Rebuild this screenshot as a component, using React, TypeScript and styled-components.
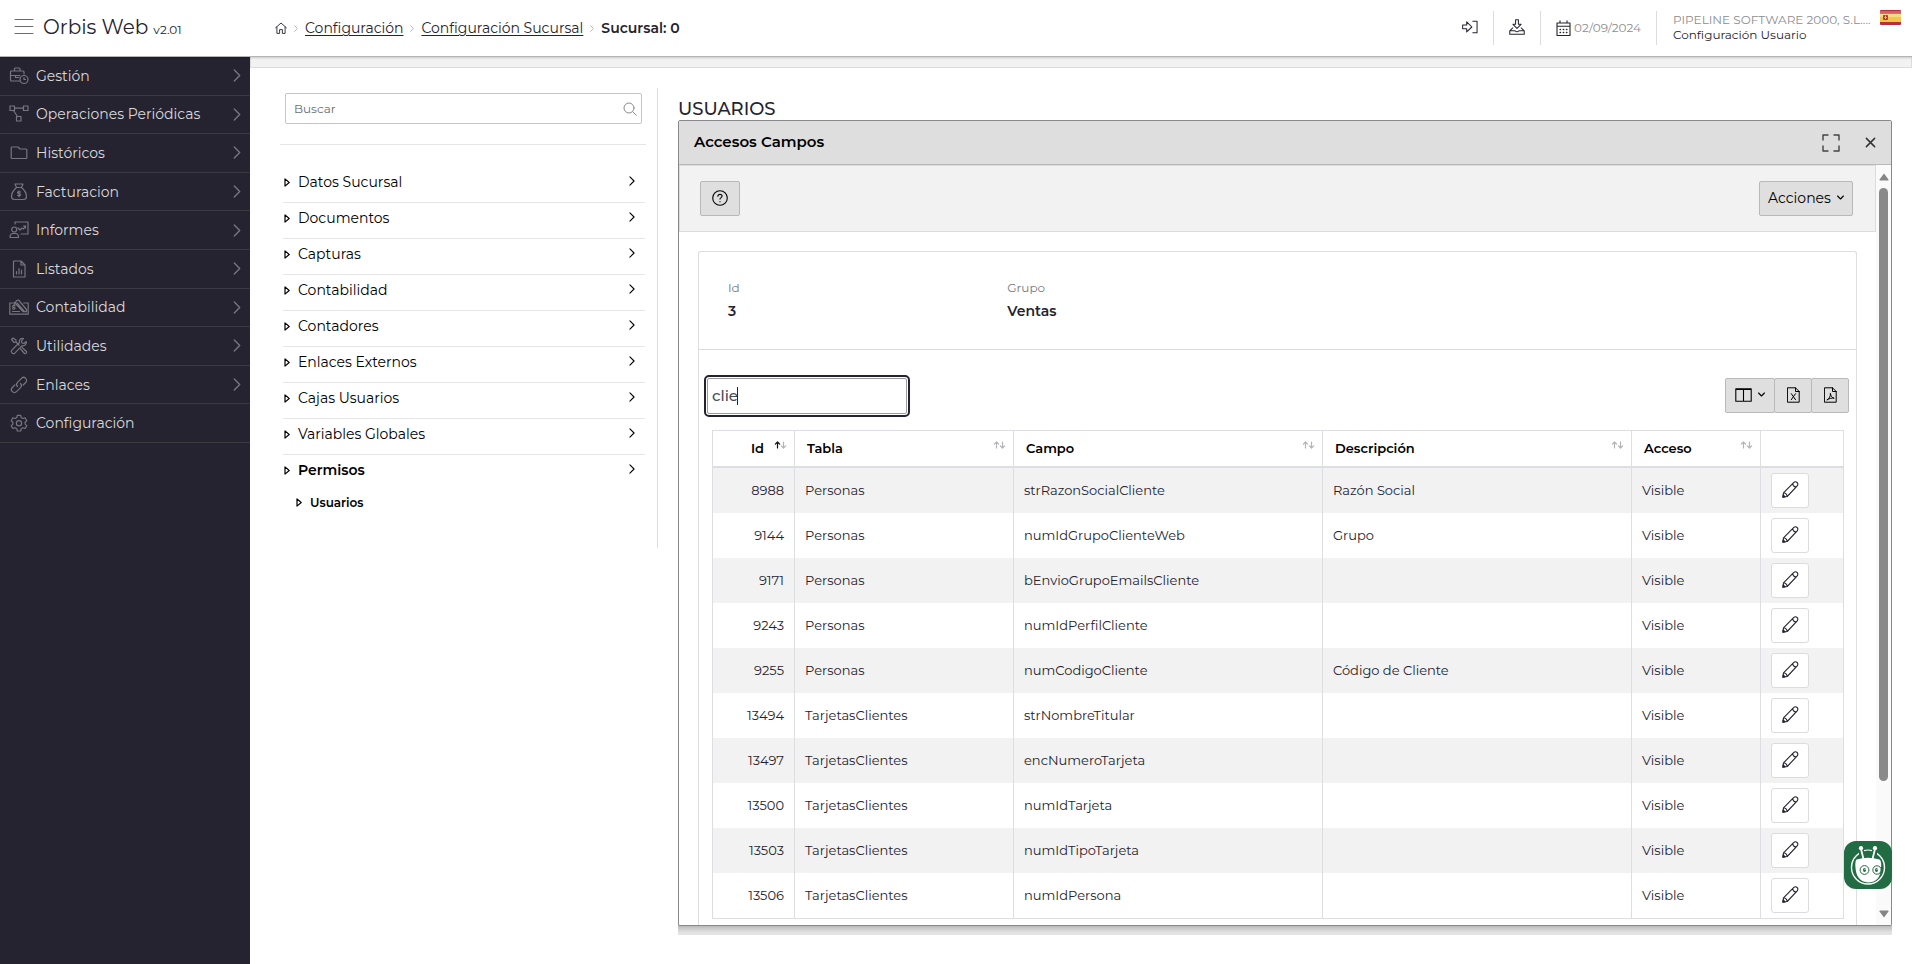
import React from "react";
import styled, { createGlobalStyle } from "styled-components";

const GlobalStyle = createGlobalStyle`
  *, *::before, *::after { box-sizing: border-box; }
  body {
    margin: 0;
    background: #fff;
    color: #25232f;
    font-family: Montserrat, Inter, "Open Sans", sans-serif;
    font-size: 14px;
    line-height: 20px;
  }
  button, input { font: inherit; color: inherit; }
  a { color: inherit; text-decoration: none; }
  ul, ol, dl, dd, h1, h2, h3 { margin: 0; padding: 0; list-style: none; }
`;

/* ---------- icons ---------- */

const Svg = styled.svg<{ $w: number; $h?: number; $stroke?: number }>`
  display: block;
  flex: none;
  width: ${(p) => p.$w}px;
  height: ${(p) => p.$h ?? p.$w}px;
  fill: none;
  stroke: currentColor;
  stroke-width: ${(p) => p.$stroke ?? 1.2};
  stroke-linecap: round;
  stroke-linejoin: round;
`;

const icons: Record<string, React.ReactNode> = {
  briefcase: (
    <>
      <path d="M11 15H2.5a1 1 0 0 1-1-1V6a1 1 0 0 1 1-1H14a1 1 0 0 1 1 1v2M5.5 5V3a1 1 0 0 1 1-1h3.500a1 1 0 0 1 1 1v2M1.500 9.500H11M6.500 9.500v2H10" />
      <circle cx="15" cy="13.500" r="4" />
      <path d="M15 11.500v2h1.500" />
    </>
  ),
  network: (
    <>
      <rect x="1" y="2" width="4.500" height="4.500" />
      <rect x="14.500" y="2" width="4.500" height="4.500" />
      <rect x="7.500" y="12.500" width="4.500" height="4.500" />
      <path d="M5.500 4.200h9M4.500 6.500l4 6" />
    </>
  ),
  folder: <path d="M3 15.500h14a.8.8 0 0 0 .8-.8V6.800a.8.8 0 0 0-.8-.8h-6L9 4H3a.8.8 0 0 0-.8.8v9.900c0 .5.300.8.8.8z" />,
  moneybag: (
    <>
      <path d="M7.500 5.500L6 2h8l-1.500 3.500zM7.500 5.500C4 8.500 2.500 11.500 2.500 14.500c0 2 1.200 3 3 3h9c1.800 0 3-1 3-3 0-3-1.500-6-5-9" />
      <path d="M11.500 10c-.4-.5-3-.7-3 .6 0 1.300 3 .8 3 2.200 0 1.300-2.600 1.200-3 .5M10 8.800v6" />
    </>
  ),
  board: (
    <>
      <path d="M6 4V2h13v12h-7M9.500 17.500H1c0-3 1.200-4 3-4h2.500c1.800 0 3 1 3 4z" />
      <circle cx="5.200" cy="9.500" r="2.500" />
      <path d="M9 8l2 2 2-2 1.500 1L16.500 6M14.500 6h2v2" />
    </>
  ),
  report: (
    <>
      <path d="M4.500 2h7.500l4 4v12h-11.500zM12 2v4h4" />
      <path d="M7.500 15v-2.500M10 15V9.500M12.500 15v-4" />
    </>
  ),
  accounting: (
    <>
      <path d="M5 6H.8v11.200h18.400V6h-4.500" />
      <path d="M5 8l2.500-4.500 2-.5 8 9.500v2.200H14L5.500 5.500M8 6l7 8M3.500 14.500h7" />
      <path d="M6 8.800c-.5-.4-2.500-.4-2.500.6 0 1.200 2.500.7 2.500 1.900 0 1-2 1-2.500.4" />
    </>
  ),
  tools: (
    <>
      <path d="M2.500 3.500l1.500-1.500 3 2v2l3 3M13 11.500l4.500 4c.8.900-1 2.700-2 2l-4-4.500M7 6L5 6.500l-2.500-3" />
      <path d="M14.500 2.500c-2-.8-4.800 1-4 4L2.800 14.200c-1.500 1.800.8 4.300 3 3l7.200-7.500c3 .8 5-2 4.200-4.200L15 7.500l-2-.5-.5-2z" />
    </>
  ),
  link: (
    <>
      <path d="M8.500 11.500c-1.200-1.200-1.200-3 0-4.200l4-4c1.200-1.200 3-1.200 4.200 0s1.200 3 0 4.200l-2.500 2.500" />
      <path d="M11.500 8.500c1.200 1.200 1.200 3 0 4.200l-4 4c-1.200 1.200-3 1.200-4.200 0s-1.200-3 0-4.200l2.500-2.500" />
    </>
  ),
  gear: (
    <>
      <path d="M8.300 2.300h3.400l.5 2.200 1.700 1 2.200-.7 1.700 2.900-1.700 1.500v1.900l1.700 1.500-1.700 2.900-2.200-.7-1.700 1-.5 2.200H8.300l-.5-2.200-1.700-1-2.200.7-1.700-2.900 1.700-1.500V9.200L2.200 7.700l1.700-2.900 2.200.7 1.700-1z" />
      <circle cx="10" cy="10.200" r="2.600" />
    </>
  ),
};

const ChevronRight = ({ w = 7, h = 12 }: { w?: number; h?: number }) => (
  <Svg $w={w} $h={h} $stroke={1.3} viewBox="0 0 7 12" aria-hidden="true">
    <path d="M1 1l5 5-5 5" />
  </Svg>
);

const ChevronDown = () => (
  <Svg $w={7} $h={5} $stroke={1.1} viewBox="0 0 7 5" aria-hidden="true">
    <path d="M.6 1l2.900 3L6.400 1" />
  </Svg>
);

const Triangle = () => (
  <Svg $w={6} $h={9} $stroke={1.2} viewBox="0 0 6 9" aria-hidden="true">
    <path d="M1 .9v7.200L5.200 4.500z" />
  </Svg>
);

const PencilIcon = () => (
  <Svg $w={17} $h={17} $stroke={1.1} viewBox="0 0 17 17" aria-hidden="true">
    <path d="M.9 16.100l.6-4.300L11.600 1.700c1.100-1.100 2.500-1.100 3.500-.2 1 1 1 2.500-.1 3.600L5.200 15.500zM10.900 2.400c-.3 2 1.400 3.800 3.400 3.400M1.500 11.800c1.800.2 3.400 1.600 3.700 3.700" />
    <path d="M.9 16.100l.3-2.200 1.900 1.900z" fill="currentColor" />
  </Svg>
);

/* ---------- top bar ---------- */

const TopBar = styled.header`
  position: relative;
  z-index: 1;
  display: flex;
  align-items: center;
  height: 57px;
  border-bottom: 1px solid #b4b4b4;
  background: #fff;
  box-shadow: 0 1px 2px rgba(0, 0, 0, 0.16);
`;

const Brand = styled.div`
  display: flex;
  align-items: center;
  flex: none;
  gap: 9px;
  width: 250px;
  padding: 0 0 3px 14px;
`;

const IconButton = styled.button`
  display: flex;
  padding: 0;
  border: 0;
  background: none;
  color: #6b6b70;
  cursor: pointer;
`;

const BrandName = styled.h1`
  padding-top: 3px;
  font-size: 20px;
  font-weight: 400;
  line-height: 26px;
`;

const Version = styled.small`
  margin-left: 5px;
  font-size: 12px;
`;

const Crumbs = styled.nav`
  display: flex;
  align-items: center;
  flex: 1;
  gap: 7px;
  padding-left: 25px;
  color: #25232f;
`;

const CrumbLink = styled.a`
  text-decoration: underline;
  text-underline-offset: 2px;
`;

const CrumbCurrent = styled.strong`
  font-weight: 600;
`;

const CrumbArrow = styled.span`
  color: #9f9fa3;
`;

const TopItem = styled.div`
  display: flex;
  align-items: center;
  height: 34px;
  padding: 0 15px;
  gap: 3px;
  border-right: 1px solid #dcdcdc;
  color: #25232f;
`;

const TopAction = styled(IconButton)`
  padding-bottom: 3px;
  color: #25232f;
`;

const DateText = styled.time`
  color: #8d8d90;
  font-size: 12px;
`;

const UserBox = styled.div`
  display: flex;
  align-items: flex-start;
  gap: 9px;
  padding: 0 11px 4px 16px;
  font-size: 12px;
  line-height: 15px;
`;

const UserLines = styled.div`
  width: 198px;
  padding-top: 2px;
  white-space: nowrap;
`;

const Company = styled.div`
  color: #8d8d90;
`;

/* ---------- layout ---------- */

const Body = styled.div`
  display: flex;
  min-height: calc(100vh - 57px);
`;

const Sidebar = styled.nav`
  flex: none;
  width: 250px;
  background: #25232f;
`;

const SideList = styled.ul`
  display: grid;
  grid-template-rows: repeat(10, 1fr);
  height: 386px;
`;

const SideItem = styled.li`
  border-bottom: 1px solid #3b3944;
`;

const SideLink = styled.a`
  display: flex;
  align-items: center;
  gap: 7px;
  height: 100%;
  padding: 0 9px;
  color: #77757f;
`;

const SideLabel = styled.span`
  flex: 1;
  color: #d9d9dc;
`;

const Main = styled.main`
  flex: 1;
  min-width: 0;
`;

const Strip = styled.div`
  height: 11px;
  border: 1px solid #dcdcdc;
  border-top: 0;
  background: #f2f2f2;
`;

const Columns = styled.div`
  display: flex;
  align-items: flex-start;
  padding: 20px 20px 0 0;
`;

const MenuColumn = styled.aside`
  flex: none;
  width: 408px;
  min-height: 460px;
  padding: 5px 11px 0 30px;
  border-right: 1px solid #dcdcdc;
`;

const SearchForm = styled.form`
  display: flex;
  align-items: center;
  height: 31px;
  margin: 0 4px 20px 5px;
  padding: 0 4px 0 8px;
  border: 1px solid #c5c5c9;
  border-radius: 2px;
  color: #8a8a8f;
`;

const SearchInput = styled.input`
  flex: 1;
  min-width: 0;
  padding: 0;
  border: 0;
  outline: 0;
  background: none;
  font-size: 12px;
  &::placeholder { color: #6d6d72; opacity: 1; }
`;

const MenuList = styled.ul`
  padding: 22px 1px 0 3px;
  border-top: 1px solid #e6e6e8;
`;

const MenuItem = styled.li<{ $active?: boolean }>`
  height: 36px;
  border-bottom: 1px solid ${(p) => (p.$active ? "transparent" : "#e6e6e8")};
  font-weight: ${(p) => (p.$active ? 600 : 400)};
  color: #000;
`;

const MenuLink = styled.a`
  display: flex;
  align-items: center;
  gap: 8px;
  height: 30px;
  padding: 0 10px 0 1px;
`;

const MenuLabel = styled.span`
  flex: 1;
`;

const MenuArrow = styled.span`
  padding-bottom: 3px;
`;

const SubLink = styled(MenuLink)`
  height: 23px;
  padding-left: 13px;
  font-size: 12px;
  font-weight: 600;
  color: #000;
`;

const Content = styled.section`
  flex: 1;
  min-width: 0;
  padding: 10px 0 30px 20px;
`;

const Title = styled.h2`
  font-size: 18px;
  font-weight: 500;
  line-height: 22px;
`;

/* ---------- dialog ---------- */

const DialogClip = styled.div`
  padding-bottom: 9px;
  background: linear-gradient(#b4b4b4, #e0e0e0 70%, #e6e6e6) bottom / 100% 10px no-repeat;
`;

const Dialog = styled.section`
  border: 1px solid #88888a;
  border-radius: 2px;
  background: #fff;
`;

const DialogHead = styled.header`
  display: flex;
  align-items: center;
  height: 44px;
  padding: 0 15px;
  border-bottom: 1px solid #b8b8b8;
  background: #dedede;
  color: #000;
`;

const DialogTitle = styled.h3`
  flex: 1;
  padding-bottom: 2px;
  font-size: 15px;
  font-weight: 600;
`;

const HeadActions = styled.div`
  display: flex;
  align-items: center;
  gap: 25px;
`;

const DialogBody = styled.div`
  display: flex;
`;

const Scroller = styled.div`
  flex: 1;
  min-width: 0;
`;

const ScrollTrack = styled.div`
  display: flex;
  flex-direction: column;
  align-items: center;
  flex: none;
  width: 15px;
  padding: 8px 0 7px;
  background: #fafafa;
`;

const ScrollArrow = styled.svg`
  display: block;
  width: 10px;
  height: 8px;
  fill: #858585;
`;

const ScrollThumb = styled.div`
  width: 9px;
  flex: 593 0 0;
  margin-top: 7px;
  border-radius: 5px;
  background: #898989;
`;

const ScrollRest = styled.div`
  flex: 129 0 0;
`;

const Toolbar = styled.div`
  display: flex;
  align-items: center;
  justify-content: space-between;
  height: 67px;
  padding: 0 22px 0 20px;
  border: 1px solid #dcdcdc;
  background: #f2f2f2;
`;

const GrayButton = styled.button<{ $w: number }>`
  display: flex;
  align-items: center;
  justify-content: center;
  gap: 6px;
  width: ${(p) => p.$w}px;
  height: 35px;
  padding: 0 0 2px;
  border: 1px solid #b9b9b9;
  border-radius: 2px;
  background: #dfdfdf;
  color: #000;
  cursor: pointer;
`;

const Card = styled.div`
  margin: 19px 19px 0;
  border: 1px solid #dcdee3;
  border-bottom: 0;
  border-radius: 3px 3px 0 0;
`;

const Fields = styled.dl`
  display: grid;
  grid-template-columns: repeat(4, 1fr);
  height: 98px;
  padding: 26px 20px 0;
  border-bottom: 1px solid #dcdcdc;
`;

const Field = styled.div`
  padding-left: 9px;
`;

const FieldLabel = styled.dt`
  color: #77777b;
  font-size: 12px;
`;

const FieldValue = styled.dd`
  padding-top: 3px;
  font-weight: 600;
`;

const Grid = styled.div`
  padding: 28px 13px 6px 13px;
`;

const GridTools = styled.div`
  display: flex;
  justify-content: space-between;
  align-items: flex-start;
  margin: 0 -6px 16px -5px;
`;

const FilterWrap = styled.div`
  position: relative;
`;

const FilterInput = styled.input`
  display: block;
  width: 200px;
  height: 36px;
  padding: 0 5px 1px 4px;
  border: 1px solid #9b9b9e;
  border-radius: 2px;
  outline: 2px solid #25232f;
  outline-offset: 1px;
  background: #fff;
  color: #474b57;
  font-size: 15px;
  font-weight: 500;
`;

const Caret = styled.span`
  position: absolute;
  top: 9px;
  left: 30px;
  width: 1px;
  height: 18px;
  background: #25232f;
`;

const ButtonGroup = styled.div`
  display: flex;
  ${GrayButton} + ${GrayButton} { margin-left: -1px; }
`;

const Table = styled.table`
  width: 100%;
  border: 1px solid #dcdee3;
  border-spacing: 0;
  border-right: 0;
  table-layout: fixed;
  font-size: 13px;
`;

const Th = styled.th`
  height: 37px;
  padding: 0 7px 1px 12px;
  border-right: 1px solid #dcdee3;
  border-bottom: 2px solid #dcdee3;
  color: #000;
  font-weight: 600;
  text-align: left;
`;

const ThInner = styled.div<{ $end?: boolean }>`
  display: flex;
  align-items: center;
  justify-content: ${(p) => (p.$end ? "flex-end" : "space-between")};
  gap: 10px;
`;

const SortMark = styled(Svg)<{ $sorted?: boolean }>`
  margin-bottom: 6px;
  color: #b4b4b8;
  path:first-child { color: ${(p) => (p.$sorted ? "#111" : "#b4b4b8")}; stroke: currentColor; }
`;

const Row = styled.tr`
  &:nth-child(odd) { background: #f2f2f2; }
`;

const Td = styled.td<{ $right?: boolean }>`
  height: 45px;
  padding: 0 10px 2px;
  border-right: 1px solid #dcdee3;
  text-align: ${(p) => (p.$right ? "right" : "left")};
`;

const EditTd = styled(Td)`
  padding: 0 10px;
`;

const EditButton = styled.button`
  display: flex;
  align-items: center;
  justify-content: center;
  width: 38px;
  height: 35px;
  padding: 0 0 3px;
  border: 1px solid #dcdcdf;
  border-radius: 3px;
  background: #fff;
  cursor: pointer;
`;

const ChatButton = styled.button`
  position: fixed;
  right: 20px;
  bottom: 75px;
  z-index: 2;
  width: 48px;
  height: 48px;
  padding: 0;
  border: 0;
  border-radius: 12px;
  background: #216c43;
  cursor: pointer;
`;

/* ---------- data ---------- */

const sideItems: [string, string][] = [
  ["briefcase", "Gestión"],
  ["network", "Operaciones Periódicas"],
  ["folder", "Históricos"],
  ["moneybag", "Facturacion"],
  ["board", "Informes"],
  ["report", "Listados"],
  ["accounting", "Contabilidad"],
  ["tools", "Utilidades"],
  ["link", "Enlaces"],
  ["gear", "Configuración"],
];

const menuItems = [
  "Datos Sucursal",
  "Documentos",
  "Capturas",
  "Contabilidad",
  "Contadores",
  "Enlaces Externos",
  "Cajas Usuarios",
  "Variables Globales",
  "Permisos",
];

const columns: [string, number][] = [
  ["Id", 82],
  ["Tabla", 219],
  ["Campo", 309],
  ["Descripción", 309],
  ["Acceso", 129],
  ["", 83],
];

const rows: [number, string, string, string][] = [
  [8988, "Personas", "strRazonSocialCliente", "Razón Social"],
  [9144, "Personas", "numIdGrupoClienteWeb", "Grupo"],
  [9171, "Personas", "bEnvioGrupoEmailsCliente", ""],
  [9243, "Personas", "numIdPerfilCliente", ""],
  [9255, "Personas", "numCodigoCliente", "Código de Cliente"],
  [13494, "TarjetasClientes", "strNombreTitular", ""],
  [13497, "TarjetasClientes", "encNumeroTarjeta", ""],
  [13500, "TarjetasClientes", "numIdTarjeta", ""],
  [13503, "TarjetasClientes", "numIdTipoTarjeta", ""],
  [13506, "TarjetasClientes", "numIdPersona", ""],
];

/* ---------- sections ---------- */

const Header = () => (
  <TopBar>
    <Brand>
      <IconButton aria-label="Menú">
        <Svg $w={20} $h={16} $stroke={1} viewBox="0 0 20 16">
          <path d="M1 .5h18M1 7.500h18M1 14.500h18" />
        </Svg>
      </IconButton>
      <BrandName>
        Orbis Web<Version>v2.01</Version>
      </BrandName>
    </Brand>
    <Crumbs aria-label="Ruta">
      <a href="#inicio" aria-label="Inicio">
        <Svg $w={12} $h={12} $stroke={0.9} viewBox="0 0 12 12">
          <path d="M.6 5.800L6 1l5.400 4.800M1.900 5v6.400h2.700V7.600h2.800v3.800h2.700V5" />
        </Svg>
      </a>
      <CrumbArrow><ChevronRight w={4} h={7} /></CrumbArrow>
      <CrumbLink href="#configuracion">Configuración</CrumbLink>
      <CrumbArrow><ChevronRight w={4} h={7} /></CrumbArrow>
      <CrumbLink href="#sucursal">Configuración Sucursal</CrumbLink>
      <CrumbArrow><ChevronRight w={4} h={7} /></CrumbArrow>
      <CrumbCurrent>Sucursal: 0</CrumbCurrent>
    </Crumbs>
    <TopItem>
      <TopAction aria-label="Salir">
        <Svg $w={16} $h={14} $stroke={1.1} viewBox="0 0 17 14">
          <path d="M.7 4.800v4h4.300v3.400L10.500 7 5 1.500v3.300zM11.500 1H16v12h-4.500" />
        </Svg>
      </TopAction>
    </TopItem>
    <TopItem>
      <TopAction aria-label="Descargar">
        <Svg $w={16} $h={16} $stroke={1.1} viewBox="0 0 17 17">
          <path d="M7 .8h3v4.800h2.800L8.500 10 4.200 5.600H7zM4 9.500L.8 12.500v3.700h15.400v-3.700L13 9.500M.8 12.500H6l2.500 1.200L11 12.500h5.200" />
        </Svg>
      </TopAction>
    </TopItem>
    <TopItem>
      <Svg $w={15} $h={17} $stroke={1.1} viewBox="0 0 15 17">
        <path d="M1 3h13v12.500H1zM1 6.200h13M4 .8V3M11 .8V3" />
        <path strokeWidth="1.600" d="M4.200 9.500h.2M7.400 9.500h.2M10.600 9.500h.2M4.200 12.500h.2M7.400 12.500h.2M10.600 12.500h.2" />
      </Svg>
      <DateText>02/09/2024</DateText>
    </TopItem>
    <UserBox>
      <UserLines>
        <Company>PIPELINE SOFTWARE 2000, S.L....</Company>
        <a href="#usuario">Configuración Usuario</a>
      </UserLines>
      <svg width="21" height="15" viewBox="0 0 21 15" role="img" aria-label="Español">
        <rect width="21" height="15" rx="1" fill="#b8303c" />
        <rect y="1" width="21" height="2" fill="#d0606a" />
        <rect y="3.500" width="21" height="8.500" fill="#f2c64c" />
        <rect y="4" width="21" height="3" fill="#f8da80" />
        <rect x="3" y="5" width="5" height="5" rx="1" fill="#a8402c" />
        <path d="M5.500 5.500v3.500M4 7.500h.8M6.300 7.500h.8" stroke="#f8da80" strokeWidth=".8" />
      </svg>
    </UserBox>
  </TopBar>
);

const SideNav = () => (
  <Sidebar aria-label="Principal">
    <SideList>
      {sideItems.map(([icon, label]) => (
        <SideItem key={label}>
          <SideLink href={`#${icon}`}>
            <Svg $w={20} viewBox="0 0 20 20" aria-hidden="true" $stroke={1.2}>{icons[icon]}</Svg>
            <SideLabel>{label}</SideLabel>
            {icon !== "gear" && <ChevronRight w={8} h={13} />}
          </SideLink>
        </SideItem>
      ))}
    </SideList>
  </Sidebar>
);

const BranchMenu = () => (
  <MenuColumn>
    <SearchForm role="search">
      <SearchInput type="text" placeholder="Buscar" aria-label="Buscar" />
      <Svg $w={14} $h={14} $stroke={1} viewBox="0 0 14 14" aria-hidden="true">
        <circle cx="6" cy="6" r="5" />
        <path d="M9.700 9.700l3.600 3.600" />
      </Svg>
    </SearchForm>
    <MenuList>
      {menuItems.map((label) => (
        <MenuItem key={label} $active={label === "Permisos"}>
          <MenuLink href="#menu">
            <Triangle />
            <MenuLabel>{label}</MenuLabel>
            <MenuArrow><ChevronRight w={6} h={10} /></MenuArrow>
          </MenuLink>
        </MenuItem>
      ))}
      <li>
        <SubLink href="#usuarios">
          <Triangle />
          Usuarios
        </SubLink>
      </li>
    </MenuList>
  </MenuColumn>
);

const FieldTable = () => (
  <Table>
    <colgroup>
      {columns.map(([name, width]) => (
        <col key={name} width={width} />
      ))}
    </colgroup>
    <thead>
      <tr>
        {columns.map(([name]) => (
          <Th key={name} scope="col">
            {name && (
              <ThInner $end={name === "Id"}>
                {name}
                <SortMark $w={13} $h={8} $stroke={1.2} $sorted={name === "Id"} viewBox="0 0 13 8">
                  <path d="M3.500 7V1M1.300 3.200L3.500 1l2.200 2.200" />
                  <path d="M9.500 1v6M7.300 4.800L9.500 7l2.200-2.200" />
                </SortMark>
              </ThInner>
            )}
          </Th>
        ))}
      </tr>
    </thead>
    <tbody>
      {rows.map(([id, table, field, description]) => (
        <Row key={id}>
          <Td $right>{id}</Td>
          <Td>{table}</Td>
          <Td>{field}</Td>
          <Td>{description}</Td>
          <Td>Visible</Td>
          <EditTd>
            <EditButton aria-label={`Editar ${field}`}>
              <PencilIcon />
            </EditButton>
          </EditTd>
        </Row>
      ))}
    </tbody>
  </Table>
);

const AccessDialog = () => (
  <DialogClip>
    <Dialog aria-label="Accesos Campos">
      <DialogHead>
        <DialogTitle>Accesos Campos</DialogTitle>
        <HeadActions>
          <IconButton aria-label="Maximizar">
            <Svg $w={18} $h={18} $stroke={1.4} viewBox="0 0 18 18" color="#444">
              <path d="M1 6V1h5M12 1h5v5M17 12v5h-5M6 17H1v-5" />
            </Svg>
          </IconButton>
          <IconButton aria-label="Cerrar">
            <Svg $w={11} $h={11} $stroke={1.6} viewBox="0 0 12 12" color="#333">
              <path d="M1.500 1.500l9 9M10.500 1.500l-9 9" />
            </Svg>
          </IconButton>
        </HeadActions>
      </DialogHead>
      <DialogBody>
        <Scroller>
          <Toolbar>
            <GrayButton $w={40} aria-label="Ayuda">
              <Svg $w={16} $stroke={1.1} viewBox="0 0 16 16">
                <circle cx="8" cy="8" r="7.300" />
                <path d="M5.900 6.300c0-2.600 4.200-2.500 4.200-.2 0 1.500-2.100 1.500-2.100 3M8 11.500v.2" />
              </Svg>
            </GrayButton>
            <GrayButton $w={94}>
              Acciones
              <ChevronDown />
            </GrayButton>
          </Toolbar>
          <Card>
            <Fields>
              <Field>
                <FieldLabel>Id</FieldLabel>
                <FieldValue>3</FieldValue>
              </Field>
              <Field>
                <FieldLabel>Grupo</FieldLabel>
                <FieldValue>Ventas</FieldValue>
              </Field>
            </Fields>
            <Grid>
              <GridTools>
                <FilterWrap>
                  <FilterInput type="text" defaultValue="clie" aria-label="Filtrar campos" />
                  <Caret />
                </FilterWrap>
                <ButtonGroup>
                  <GrayButton $w={50} aria-label="Columnas">
                    <Svg $w={17} $h={14} $stroke={1.1} viewBox="0 0 17 14">
                      <path d="M.8.8h15.400v12.400H.8zM8.500 1v12M1 1.500h15" />
                    </Svg>
                    <ChevronDown />
                  </GrayButton>
                  <GrayButton $w={38} aria-label="Exportar a Excel">
                    <Svg $w={13} $h={16} $stroke={1} viewBox="0 0 13 16">
                      <path d="M.8.8h7.700l3.700 3.700v10.700H.8zM8.500.8v3.700h3.700M4.300 6.700l4.200 6M8.500 6.700l-4.200 6" />
                    </Svg>
                  </GrayButton>
                  <GrayButton $w={38} aria-label="Exportar a PDF">
                    <Svg $w={13} $h={16} $stroke={1} viewBox="0 0 13 16">
                      <path d="M.8.8h7.700l3.700 3.700v10.700H.8zM8.500.8v3.700h3.700M3.200 12.800c2-.8 3.600-4 3.200-6.500.2 2.500 1.600 4.500 3.800 4.900-2.500-.4-4.900.2-7 1.600z" />
                    </Svg>
                  </GrayButton>
                </ButtonGroup>
              </GridTools>
              <FieldTable />
            </Grid>
          </Card>
        </Scroller>
        <ScrollTrack aria-hidden="true">
          <ScrollArrow viewBox="0 0 10 8"><path d="M5 .5L9.500 6.500Q9.700 7.500 8.800 7.500H1.200Q.3 7.500.5 6.500z" /></ScrollArrow>
          <ScrollThumb />
          <ScrollRest />
          <ScrollArrow viewBox="0 0 10 8"><path d="M5 7.500L.5 1.500Q.3.500 1.200.500h7.600Q9.700.500 9.500 1.500z" /></ScrollArrow>
        </ScrollTrack>
      </DialogBody>
    </Dialog>
  </DialogClip>
);

const ChatBot = () => (
  <ChatButton aria-label="Asistente">
    <svg width="48" height="48" viewBox="0 0 48 48" fill="none">
      <circle cx="24" cy="26.500" r="16.500" stroke="#fff" strokeWidth="1.400" />
      <path d="M15 8h18v8H15z" fill="#216c43" />
      <path d="M20 9.600q4-1.200 8 0" stroke="#fff" strokeWidth="1.200" />
      <path d="M12.500 18.500Q24 15 35.500 18.500Q37.800 20 37 27Q36.500 41 24 41.500Q12.500 40.500 11.500 27Q10.800 20.500 12.500 18.500z" fill="#fff" />
      <path d="M17 8l2.500 10M31 8l-2.500 10" stroke="#fff" strokeWidth="1.800" />
      <circle cx="17" cy="7.200" r="2.100" fill="#fff" />
      <circle cx="31" cy="7.200" r="2.100" fill="#fff" />
      <circle cx="20.500" cy="29" r="4.400" stroke="#216c43" strokeWidth="1" />
      <circle cx="33" cy="29" r="4.200" stroke="#216c43" strokeWidth="1" />
      <ellipse cx="20.500" cy="29" rx="1.500" ry="2.100" fill="#216c43" />
      <ellipse cx="32.500" cy="29" rx="1.500" ry="2.100" fill="#216c43" />
      <circle cx="21" cy="28.300" r=".6" fill="#fff" />
      <circle cx="33" cy="28.300" r=".6" fill="#fff" />
    </svg>
  </ChatButton>
);

export default function App() {
  return (
    <>
      <GlobalStyle />
      <Header />
      <Body>
        <SideNav />
        <Main>
          <Strip />
          <Columns>
            <BranchMenu />
            <Content>
              <Title>USUARIOS</Title>
              <AccessDialog />
            </Content>
          </Columns>
        </Main>
      </Body>
      <ChatBot />
    </>
  );
}
